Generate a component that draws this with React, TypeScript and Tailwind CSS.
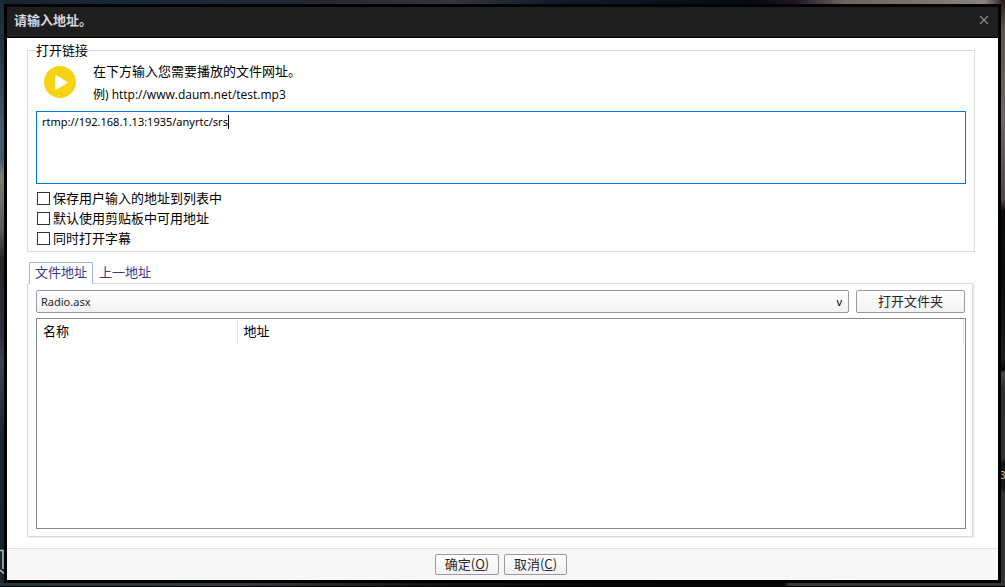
import { useState } from 'react'
import clsx from 'clsx'

const options = ['保存用户输入的地址到列表中', '默认使用剪贴板中可用地址', '同时打开字幕']
const tabs = ['文件地址', '上一地址']

const buttonStyle =
    'rounded-xs border border-[#9a9a9e] bg-linear-to-b from-white to-[#f2f2f2] text-[#26262c] hover:to-[#e6e6ea]'

function PlayIcon() {
    return (
        <svg viewBox="0 0 32 32" className="w-8 h-8 shrink-0">
            <circle cx="16" cy="16" r="16" fill="#f6d414" />
            <path d="M12 10 L22.5 16.5 L12 23 Z" fill="#fff" stroke="#fff" strokeWidth="1.5" strokeLinejoin="round" />
        </svg>
    )
}

function CloseIcon() {
    return (
        <svg viewBox="0 0 10 10" className="w-[10px] h-[10px]">
            <path d="M1 1 L9 9 M9 1 L1 9" stroke="#8a8a8a" strokeWidth="1.2" />
        </svg>
    )
}

// Slivers of the desktop that stay visible round the dialog
function Desktop() {
    return (
        <div aria-hidden="true" className="absolute inset-0 bg-[#101418]">
            <div className="absolute inset-x-0 top-0 h-1 bg-[linear-gradient(90deg,#16242f_0%,#15283a_15%,#252631_32%,#34343a_45%,#121a2c_55%,#070a10_75%,#1c1520_79%,#6b645f_84%,#8a837b_98%,#2b1a18_100%)]" />
            <div className="absolute inset-y-0 left-0 w-1 bg-[linear-gradient(180deg,#1b2936_0%,#233747_10%,#425e70_22%,#44596a_27%,#7c7b70_30%,#5c5a58_39%,#24242a_44%,#2c2f3a_57%,#3b4250_62%,#1c2630_74%,#14212b_92%,#1f2a2e_100%)]" />
            <div className="absolute inset-y-0 right-0 w-1 bg-[linear-gradient(180deg,#2d1d1b_0%,#5e524e_5%,#6e6463_20%,#4e4547_34%,#0e080c_36%,#0c090b_48%,#1d1d1d_61%,#050505_63%,#484848_63.5%,#2e2e2e_66%,#303030_78%,#151515_79%,#151515_83%,#303030_84%,#333_100%)]" />
            <div className="absolute inset-x-0 bottom-0 h-1 border-b border-black bg-[linear-gradient(90deg,#27343b_0%,#343a40_24%,#15191c_40%,#050505_60%,#040404_78%,#393637_78.5%,#373435_100%)]" />
            <svg viewBox="0 0 4 26" className="absolute left-0 bottom-3 w-1 h-[26px]">
                <path d="M0 1.5 H3 V20 M0 21 L4 24.5" fill="none" stroke="#b9bdc0" strokeWidth="1.5" />
            </svg>
            <span className="absolute left-full top-[469px] -ml-[5px] text-[10px] leading-3 text-[#c8c8c8]">3</span>
        </div>
    )
}

export default function App() {
    const [address, setAddress] = useState('rtmp://192.168.1.13:1935/anyrtc/srs')
    const [tab, setTab] = useState(tabs[0])

    return (
        <div className='font-["Noto_Sans_CJK_SC",sans-serif] relative min-h-screen flex p-1 text-[13px] leading-5 text-black overflow-hidden'>
            <Desktop />
            <main className="relative flex-1 min-w-0 flex flex-col border-3 border-black bg-white">
                <header className="flex items-center justify-between h-[31px] pl-[7px] pr-[9px] pb-1 bg-[#1e1e1e] border-b border-black">
                    <h1 className="font-bold text-[#d8d8e0]">请输入地址。</h1>
                    <button type="button" aria-label="关闭"><CloseIcon /></button>
                </header>

                <div className="flex-1 flex flex-col pl-5 pr-[23px] pt-[2px] pb-[11px]">
                    <fieldset className="min-w-0 border border-[#dcdcdc] px-2 pb-[3px]">
                        <legend className="leading-5">打开链接</legend>
                        <div className="flex gap-[17px] pl-2 pb-1">
                            <div className="pt-[6px]"><PlayIcon /></div>
                            <div>
                                <p className="leading-[22px]">在下方输入您需要播放的文件网址。</p>
                                <p className='font-["Open_Sans","Noto_Sans_CJK_SC",sans-serif] text-xs leading-[25px]'>例) http://www.daum.net/test.mp3</p>
                            </div>
                        </div>
                        <div className="relative flex">
                            <textarea
                                aria-label="打开链接"
                                value={address}
                                onChange={(e) => setAddress(e.target.value)}
                                className='flex-1 h-[73px] px-[5px] py-[2px] resize-none border border-[#0078d7] outline-none font-["Noto_Sans",sans-serif] text-[11px] leading-4'
                            />
                            <span aria-hidden="true" className="absolute left-48 top-1 w-px h-[14px] bg-black" />
                        </div>
                        <div className="flex flex-col pt-1 pl-px">
                            {options.map((option) => (
                                <label key={option} className="flex items-center gap-[3px] h-5">
                                    <input type="checkbox" className="appearance-none w-[13px] h-[13px] border border-[#333] bg-white checked:bg-[#0078d7]" />
                                    {option}
                                </label>
                            ))}
                        </div>
                    </fieldset>

                    <div role="tablist" className="relative flex items-end h-8 px-[2px] -mb-px text-[#3a3a86]">
                        {tabs.map((t) => (
                            <button
                                key={t}
                                type="button"
                                role="tab"
                                aria-selected={t === tab}
                                onClick={() => setTab(t)}
                                className={clsx(
                                    'h-[22px] px-[5px] pb-[3px] border border-b-0 leading-4',
                                    t === tab ? 'border-[#a9b3d3] bg-white' : 'border-transparent'
                                )}
                            >
                                {t}
                            </button>
                        ))}
                    </div>

                    <section className="flex-1 flex flex-col mr-[2px] pl-2 pr-[6px] pt-[6px] pb-[7px] border border-[#d9d9d9] shadow-[2px_1px_0_#eeeeee]">
                        <div className="flex gap-[7px] pr-px mb-[5px]">
                            <div className="relative flex-1 flex">
                                <select
                                    aria-label="文件地址"
                                    className={clsx(buttonStyle, 'appearance-none flex-1 h-[23px] px-1 font-["Noto_Sans",sans-serif] text-[11px]')}
                                >
                                    <option>Radio.asx</option>
                                </select>
                                <span aria-hidden="true" className='absolute right-[7px] top-0 font-["Noto_Sans",sans-serif] text-[11px] leading-6 pointer-events-none'>v</span>
                            </div>
                            <button type="button" className={clsx(buttonStyle, 'w-[109px] h-[23px] pb-[2px] leading-4')}>打开文件夹</button>
                        </div>
                        <div className="flex-1 border border-[#828790] pt-px pr-px">
                            <table className="w-full table-fixed border-collapse text-left">
                                <thead>
                                    <tr className="h-6">
                                        <th className="w-[200px] pl-[6px] pb-[3px] font-normal border-r border-[#e5e5e5]">名称</th>
                                        <th className="pl-[6px] pb-[3px] font-normal border-r border-[#e5e5e5]">地址</th>
                                    </tr>
                                </thead>
                                <tbody />
                            </table>
                        </div>
                    </section>
                </div>

                <footer className="flex justify-center gap-[5px] py-[5px] pr-[3px] border-t border-[#e3e3e3] bg-[#f7f7f7]">
                    <button type="button" className={clsx(buttonStyle, 'w-16 h-[21px] pb-[2px] leading-4')}>确定(<u>O</u>)</button>
                    <button type="button" className={clsx(buttonStyle, 'w-[63px] h-[21px] pb-[2px] leading-4')}>取消(<u>C</u>)</button>
                </footer>
            </main>
        </div>
    )
}
